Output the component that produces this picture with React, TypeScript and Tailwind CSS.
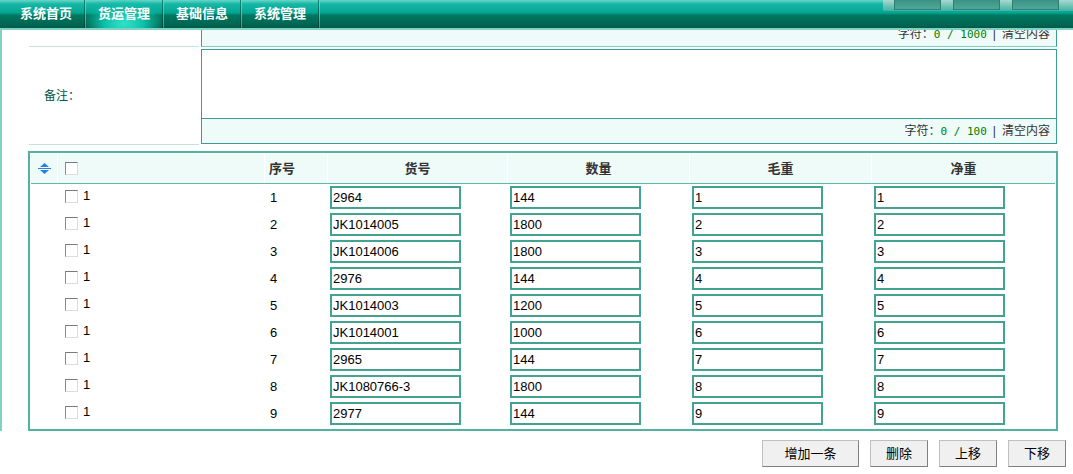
import React from "react";

const tabs = ["系统首页", "货运管理", "基础信息", "系统管理"];

const rows = [
  { no: "2964", qty: "144" },
  { no: "JK1014005", qty: "1800" },
  { no: "JK1014006", qty: "1800" },
  { no: "2976", qty: "144" },
  { no: "JK1014003", qty: "1200" },
  { no: "JK1014001", qty: "1000" },
  { no: "2965", qty: "144" },
  { no: "JK1080766-3", qty: "1800" },
  { no: "2977", qty: "144" },
];

const cols = "grid grid-cols-[27px_207px_63px_180px_182px_182px_183px]";

const CheckBox = () => (
  <span className="inline-block h-[13px] w-[13px] border border-t-[#7a7a7a] border-l-[#7b8ca8] border-r-[#dcdcdc] border-b-[#dcdcdc] bg-white" />
);

const Counter = ({ max }: { max: string }) => (
  <span className="text-[12px] text-[#333]">
    字符：<span className="font-['DejaVu_Sans_Mono',monospace] text-[11px] text-[#008000]">0 / {max}</span>
    <span className="mx-[6px]">|</span>清空内容
  </span>
);

const Field = ({ value }: { value: string }) => (
  <div className="pl-[2px] pt-[2px]">
    <input
      readOnly
      value={value}
      className="h-[23px] w-[131px] border-2 border-[#43a292] bg-white px-[1px] text-[13px] text-black outline-none"
    />
  </div>
);

export default function App() {
  return (
    <div className="relative h-[474px] w-[1073px] overflow-hidden bg-white font-['Liberation_Sans','Noto_Sans_CJK_SC',sans-serif] text-[12px]">
      {/* top nav */}
      <div className="relative flex h-[30px] border-b-2 border-[#7fd3c5] bg-[linear-gradient(to_bottom,#6ad6c8_0%,#17b7a6_14%,#03a592_46%,#00785f_54%,#006450_90%,#005a48_100%)] pl-[8px]">
        {tabs.map((t, i) => (
          <React.Fragment key={t}>
            <div
              className={`flex w-[76px] items-center justify-center text-[13px] font-bold text-white ${
                i === 1
                  ? "bg-[radial-gradient(ellipse_at_50%_85%,#30e2c9_0%,#0fc2ab_35%,transparent_75%)]"
                  : ""
              }`}
            >
              {t}
            </div>
            <div className="flex w-[2px]">
              <div className="w-[1px] bg-[linear-gradient(to_bottom,#0b8a7a,#003d32)]" />
              <div className="w-[1px] bg-[linear-gradient(to_bottom,#6fd6c8,#2f9e8c)]" />
            </div>
          </React.Fragment>
        ))}
        <div className="absolute right-0 top-0 flex h-[11px] w-[190px] gap-[12px] bg-[linear-gradient(to_bottom,#a8d8d0,#3fb2a2)] pl-[11px]">
          {[0, 1, 2].map((k) => (
            <div
              key={k}
              className="h-[10px] w-[47px] border border-t-0 border-[#2f7f70] bg-[linear-gradient(to_bottom,#3a9284,#4fa898)]"
            />
          ))}
        </div>
      </div>

      {/* form area */}
      <div className="border-l-2 border-[#7fd3c5]">
        <div className="ml-[27px] flex">
          <div className="h-[17px] w-[170px] border-b border-[#c5e3dc]" />
          <div className="ml-[2px] flex h-[17px] w-[856px] items-end justify-end overflow-hidden border-b border-l border-r border-b-[#7fd0c0] border-l-[#3a9e8e] border-r-[#3a9e8e] bg-[#effbf8] pb-[5px] pr-[6px] leading-[12px]">
            <Counter max="1000" />
          </div>
        </div>

        <div className="ml-[27px] flex h-[98px]">
          <div className="flex w-[170px] items-center border-b border-[#c5e3dc] pl-[15px] text-[#00574a]">
            备注：
          </div>
          <div className="ml-[2px] mt-[2px] flex h-[95px] w-[856px] flex-col border border-[#3a9e8e]">
            <div className="flex-1 bg-white" />
            <div className="flex h-[25px] items-center justify-end border-t border-[#3a9e8e] bg-[#effbf8] pr-[6px]">
              <Counter max="100" />
            </div>
          </div>
        </div>

        {/* detail table */}
        <div className="ml-[26px] mt-[6px] w-[1030px] border-2 border-[#52b3a3] p-[1px]">
          <div className={`${cols} h-[30px] border-b border-[#5fb8a8] bg-[#effbf8] text-[13px] font-bold text-[#333]`}>
            <div className="flex items-center justify-center border-r border-white">
              <svg width="13" height="11" viewBox="0 0 13 11">
                <path d="M6.5 0 L11 4 L2 4 Z" fill="#2a7fe0" />
                <rect x="0" y="5" width="13" height="1" fill="#2a7fe0" />
                <path d="M2 7 L11 7 L6.5 11 Z" fill="#2a7fe0" />
              </svg>
            </div>
            <div className="flex items-center border-r border-white pl-[7px]">
              <CheckBox />
            </div>
            <div className="flex items-center border-r border-white pl-[4px]">序号</div>
            <div className="flex items-center justify-center border-r border-white">货号</div>
            <div className="flex items-center justify-center border-r border-white">数量</div>
            <div className="flex items-center justify-center border-r border-white">毛重</div>
            <div className="flex items-center justify-center">净重</div>
          </div>
          <div className="pb-[1px]">
            {rows.map((r, i) => (
              <div key={i} className={`${cols} h-[27px] text-[13px] text-black`}>
                <div />
                <div className="flex items-start gap-[5px] pl-[7px] pt-[6px] leading-[13px]">
                  <CheckBox />
                  <span className="-mt-[1px]">1</span>
                </div>
                <div className="pl-[5px] pt-[4px]">{i + 1}</div>
                <Field value={r.no} />
                <Field value={r.qty} />
                <Field value={String(i + 1)} />
                <Field value={String(i + 1)} />
              </div>
            ))}
          </div>
        </div>
      </div>

      {/* buttons */}
      <div className="mr-[7px] mt-[9px] flex justify-end gap-[11px] text-[13px] text-black">
        {["增加一条", "删除", "上移", "下移"].map((b, i) => (
          <button
            key={b}
            className={`h-[27px] border border-t-[#c0c0c0] border-l-[#c0c0c0] border-r-[#808080] border-b-[#808080] bg-[#f0f0f0] ${
              i === 0 ? "w-[97px]" : "w-[58px]"
            }`}
          >
            {b}
          </button>
        ))}
      </div>
    </div>
  );
}
